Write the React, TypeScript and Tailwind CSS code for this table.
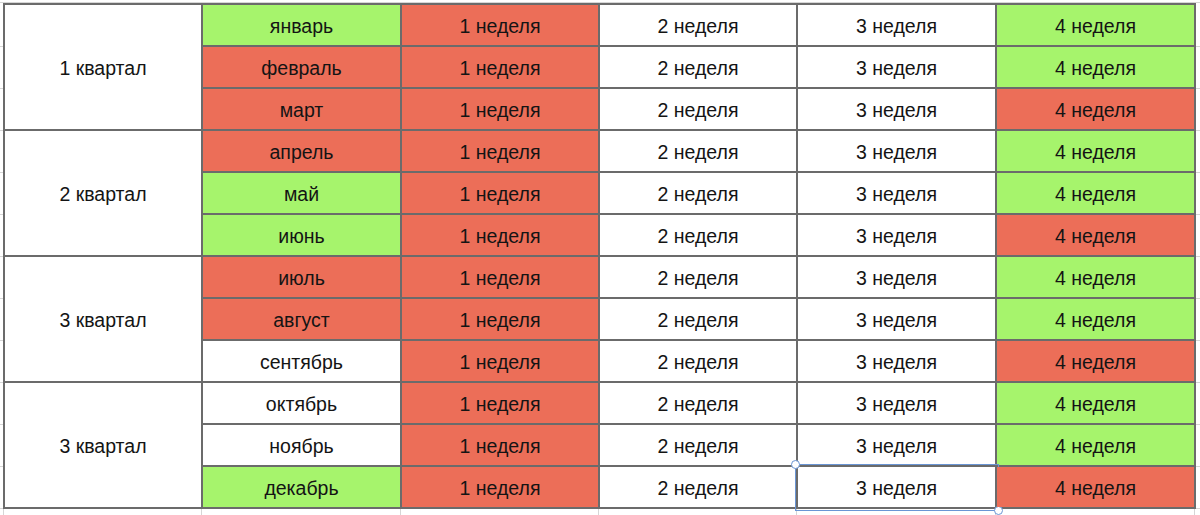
const GREEN = 'bg-[#a6f46c]';
const RED = 'bg-[#ec6e58]';
const WHITE = 'bg-white';

type Month = { name: string; color: string; w4: string };

const quarters: { title: string; months: Month[] }[] = [
  {
    title: '1 квартал',
    months: [
      { name: 'январь', color: GREEN, w4: GREEN },
      { name: 'февраль', color: RED, w4: GREEN },
      { name: 'март', color: RED, w4: RED },
    ],
  },
  {
    title: '2 квартал',
    months: [
      { name: 'апрель', color: RED, w4: GREEN },
      { name: 'май', color: GREEN, w4: GREEN },
      { name: 'июнь', color: GREEN, w4: RED },
    ],
  },
  {
    title: '3 квартал',
    months: [
      { name: 'июль', color: RED, w4: GREEN },
      { name: 'август', color: RED, w4: GREEN },
      { name: 'сентябрь', color: WHITE, w4: RED },
    ],
  },
  {
    title: '3 квартал',
    months: [
      { name: 'октябрь', color: WHITE, w4: GREEN },
      { name: 'ноябрь', color: WHITE, w4: GREEN },
      { name: 'декабрь', color: GREEN, w4: RED },
    ],
  },
];

const Cell = ({ color, children, selected }: { color: string; children: React.ReactNode; selected?: boolean }) => (
  <div className={`${color} relative flex items-center justify-center h-[40px] pt-[3px]`}>
    {children}
    {selected && (
      <div className="absolute -left-[3px] -top-[3px] -right-[4px] -bottom-[4px] border border-[#6a95d4] pointer-events-none">
        <div className="absolute -left-[5px] -top-[5px] w-[9px] h-[9px] rounded-full bg-white border border-[#6a95d4]" />
        <div className="absolute -right-[5px] -bottom-[5px] w-[9px] h-[9px] rounded-full bg-white border border-[#6a95d4]" />
      </div>
    )}
  </div>
);

export default function App() {
  return (
    <div
      className="w-[1200px] h-[515px] bg-white overflow-hidden text-[19.5px] text-[#141414]"
      style={{ fontFamily: '"Liberation Sans", Arial, sans-serif' }}
    >
      <div className="h-[3px] border-b border-[#d6d6d6]" />
      <div className="flex">
        <div className="w-[3px] flex flex-col pt-[2px]">
          {Array.from({ length: 12 }).map((_, i) => (
            <div key={i} className="h-[42px] border-b border-[#d6d6d6]" />
          ))}
        </div>
        <div className="grid grid-cols-[196px_197px_196px_196px_197px_197px] gap-[2px] p-[2px] bg-[#6b6b6b]">
          {quarters.map((q, qi) =>
            q.months.map((m, mi) => {
              const row = qi * 3 + mi;
              return (
                <div key={m.name} className="contents">
                  {mi === 0 && (
                    <div
                      className={`bg-white flex items-center justify-center pt-[3px] ${
                        qi === 0 ? 'row-start-1' : qi === 1 ? 'row-start-4' : qi === 2 ? 'row-start-7' : 'row-start-10'
                      } row-span-3 col-start-1`}
                    >
                      {q.title}
                    </div>
                  )}
                  <Cell color={m.color}>{m.name}</Cell>
                  <Cell color={RED}>1 неделя</Cell>
                  <Cell color={WHITE}>2 неделя</Cell>
                  <Cell color={WHITE} selected={row === 11}>
                    3 неделя
                  </Cell>
                  <Cell color={m.w4}>4 неделя</Cell>
                </div>
              );
            })
          )}
        </div>
        <div className="flex-1 flex flex-col pt-[2px]">
          {Array.from({ length: 12 }).map((_, i) => (
            <div key={i} className="h-[42px] border-b border-[#d6d6d6]" />
          ))}
        </div>
      </div>
      <div className="flex h-[6px]">
        <div className="w-[4px] border-r border-[#d6d6d6]" />
        <div className="w-[198px] border-r border-[#d6d6d6]" />
        <div className="w-[199px] border-r border-[#d6d6d6]" />
        <div className="w-[198px] border-r border-[#d6d6d6]" />
        <div className="w-[198px] border-r border-[#d6d6d6]" />
        <div className="w-[199px] border-r border-[#d6d6d6]" />
        <div className="w-[199px] border-r border-[#d6d6d6]" />
      </div>
    </div>
  );
}
